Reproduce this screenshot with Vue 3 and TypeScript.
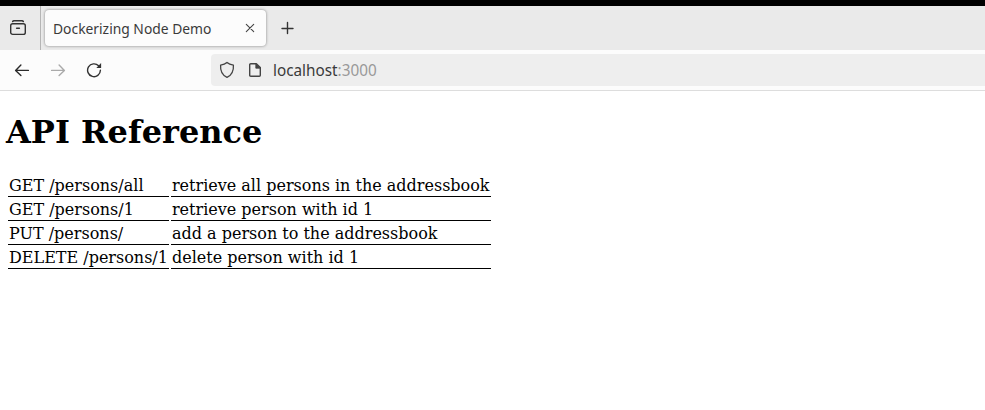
<script setup lang="ts">
interface Endpoint {
  route: string
  description: string
}

const endpoints: Endpoint[] = [
  { route: 'GET /persons/all', description: 'retrieve all persons in the addressbook' },
  { route: 'GET /persons/1', description: 'retrieve person with id 1' },
  { route: 'PUT /persons/', description: 'add a person to the addressbook' },
  { route: 'DELETE /persons/1', description: 'delete person with id 1' },
]
</script>

<template>
  <div class="browser">
    <header class="tab-strip">
      <div class="recent">
        <svg width="18" height="18" viewBox="0 0 18 18" fill="none" stroke="#333" stroke-width="1.4" stroke-linecap="round">
          <path d="M3.6 2.6Q4 1.7 5 1.7H13Q14 1.7 14.4 2.6" />
          <rect x="1.7" y="4.8" width="14.6" height="10.6" rx="2" />
          <path d="M7.6 9.2H10.4" />
        </svg>
      </div>
      <div class="tab">
        <span class="tab-title">Dockerizing Node Demo</span>
        <svg width="10" height="10" viewBox="0 0 10 10" fill="none" stroke="#444" stroke-width="1.1" stroke-linecap="round">
          <path d="M1.3 1.3L8.7 8.7M8.7 1.3L1.3 8.7" />
        </svg>
      </div>
      <svg class="new-tab" width="14" height="14" viewBox="0 0 14 14" fill="none" stroke="#333" stroke-width="1.4" stroke-linecap="round">
        <path d="M6.5 1.5V12.5M1 7.5H12" />
      </svg>
    </header>
    <nav class="toolbar">
      <svg class="back" width="16" height="16" viewBox="0 0 16 16" fill="none" stroke="#2b2b2b" stroke-width="1.4" stroke-linecap="round" stroke-linejoin="round">
        <path d="M14.4 8.4H1.6M6.9 3L1.6 8.4L6.9 13.6" />
      </svg>
      <svg class="forward" width="16" height="16" viewBox="0 0 16 16" fill="none" stroke="#aaa" stroke-width="1.4" stroke-linecap="round" stroke-linejoin="round">
        <path d="M1.6 8.4H14.4M9.1 3L14.4 8.4L9.1 13.6" />
      </svg>
      <svg class="reload" width="16" height="16" viewBox="0 0 16 16" fill="none" stroke="#333" stroke-width="1.4" stroke-linecap="round">
        <path d="M14.4 8.3A6.4 6.4 0 1 1 12.6 3.8L13.3 4.5" />
        <path d="M15.1 1.1V5.9H10.3Z" fill="#333" stroke="none" />
      </svg>
      <div class="address">
        <svg class="shield" width="16" height="18" viewBox="0 0 16 18" fill="none" stroke="#444" stroke-width="1.3" stroke-linejoin="round">
          <path d="M8 1.4C6.2 3 3.9 3.7 1.6 4.1C1.2 9.4 3.2 14.1 8 16.4C12.8 14.1 14.8 9.4 14.4 4.1C12.1 3.7 9.8 3 8 1.4Z" />
        </svg>
        <svg class="page-icon" width="12" height="14" viewBox="0 0 12 14" fill="none" stroke="#444" stroke-width="1.4" stroke-linejoin="round">
          <path d="M1.8.8H7.4L11.3 4.6V12.2Q11.3 13.2 10.3 13.2H1.8Q.7 13.2.7 12.2V1.8Q.7.8 1.8.8Z" />
          <path d="M6.8.8V5.2H11.3Z" fill="#444" stroke-width=".8" />
        </svg>
        <span class="url">localhost<span class="port">:3000</span></span>
      </div>
    </nav>
    <main class="page">
      <h1>API Reference</h1>
      <table>
        <tbody>
          <tr v-for="endpoint in endpoints" :key="endpoint.route">
            <td>{{ endpoint.route }}</td>
            <td>{{ endpoint.description }}</td>
          </tr>
        </tbody>
      </table>
    </main>
  </div>
</template>

<style scoped>
.browser {
  box-sizing: border-box;
  height: 410px;
  overflow: hidden;
  border-top: 6px solid #000;
  background: #fff;
  font-family: "Noto Sans", sans-serif;
  color: #3a3a3a;
}

svg {
  display: block;
  flex: none;
}

.tab-strip {
  display: flex;
  align-items: center;
  height: 44px;
  background: #eaeaea;
}

.recent {
  box-sizing: border-box;
  display: flex;
  align-items: center;
  width: 41px;
  height: 44px;
  padding-left: 9px;
  border-right: 1px solid #b5b5b5;
}

.tab {
  box-sizing: border-box;
  display: flex;
  align-items: center;
  justify-content: space-between;
  width: 221px;
  height: 36px;
  margin-left: 4px;
  padding: 0 11px 0 8px;
  border-radius: 4px;
  background: #fcfcfc;
  box-shadow: 0 0 3px rgba(0, 0, 0, 0.45);
}

.tab-title {
  font-size: 15px;
  line-height: 20px;
  white-space: nowrap;
  transform: scaleX(0.923);
  transform-origin: left;
}

.new-tab {
  margin-left: 15px;
}

.toolbar {
  box-sizing: border-box;
  display: flex;
  align-items: center;
  height: 41px;
  padding-left: 14px;
  border-bottom: 1px solid #ddd;
  background: #fcfcfc;
}

.forward,
.reload {
  margin-left: 20px;
}

.address {
  display: flex;
  flex: 1;
  align-items: center;
  height: 32px;
  margin-left: 109px;
  padding-left: 8px;
  border-radius: 4px 0 0 4px;
  background: #eee;
}

.page-icon {
  margin-left: 14px;
}

.url {
  margin-left: 12px;
  font-size: 16px;
  line-height: 20px;
  transform: scaleX(0.955);
  transform-origin: left;
}

.port {
  color: #999;
}

.page {
  padding: 22px 6px 0;
  font-family: "DejaVu Serif", serif;
  font-size: 16px;
  color: #000;
}

h1 {
  margin: 0 0 22px;
  font-size: 32px;
  line-height: 38px;
}

table {
  border-spacing: 2px;
}

td {
  padding: 1px;
  border-bottom: 1px solid #000;
  line-height: 19px;
}
</style>
